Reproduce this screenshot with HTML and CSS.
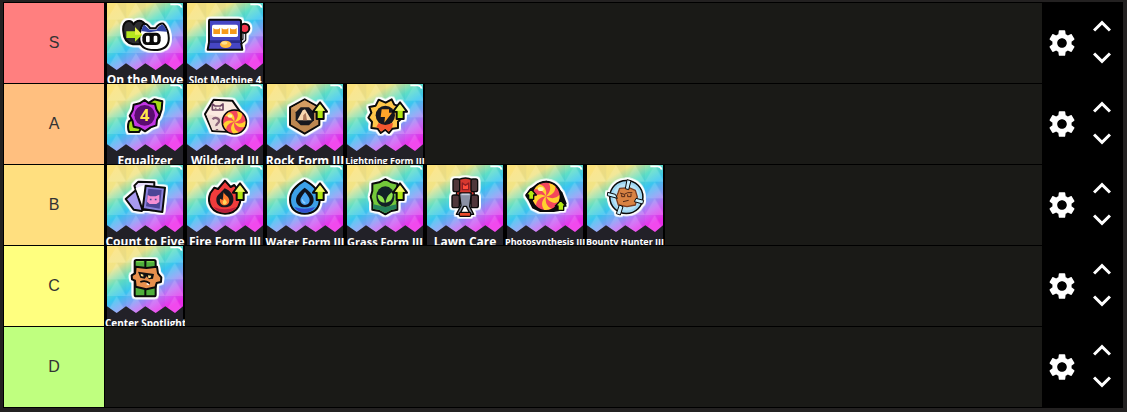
FILE: index.html
```html
<!DOCTYPE html>
<html lang="en">
<head>
    <meta charset="UTF-8">
    <meta name="viewport" content="width=device-width, initial-scale=1.0">
    <title>Tier List</title>
    <link rel="stylesheet" href="styles.css">
</head>
<body>
    <!-- shared shapes -->
    <svg class="defs" width="0" height="0" aria-hidden="true">
        <defs>
            <linearGradient id="rainbow" gradientUnits="userSpaceOnUse" x1="40" y1="0" x2="160" y2="200">
                <stop offset="0" stop-color="#fbe27c"/>
                <stop offset="0.2" stop-color="#f0e488"/>
                <stop offset="0.4" stop-color="#5fdfc6"/>
                <stop offset="0.55" stop-color="#3ac6f0"/>
                <stop offset="0.7" stop-color="#84a0f6"/>
                <stop offset="0.83" stop-color="#c66cf5"/>
                <stop offset="1" stop-color="#ef2bea"/>
            </linearGradient>
            <pattern id="triangles" width="58" height="50" patternUnits="userSpaceOnUse">
                <path d="M0 50L29 0L58 50Z" fill="#fff" opacity="0.14"/>
                <path d="M29 0H58V50Z" fill="#083c9c" opacity="0.04"/>
            </pattern>
            <g id="card">
                <rect width="228" height="240" fill="#222128"/>
                <path d="M0 0H228V181L204 201L175 181L146 201L115 181L87 201L57 181L29 201L0 181Z" fill="url(#rainbow)"/>
                <path d="M0 0H228V181L204 201L175 181L146 201L115 181L87 201L57 181L29 201L0 181Z" fill="url(#triangles)"/>
                <path d="M190 4H212Q222 4 224 14" fill="none" stroke="#fff" stroke-width="5"/>
            </g>
            <g id="up">
                <path d="M159 55L180 83H170V105H149V83H138Z" fill="#b4ea12" stroke="#0a0a0a" stroke-width="6" stroke-linejoin="round"/>
                <path d="M159 60L174 80H144Z" fill="#f3f56a" stroke="none"/>
            </g>
            <g id="candy">
                <circle r="44" fill="#f4475c" stroke="#0a0a0a" stroke-width="6"/>
                <g fill="#ffd22e" stroke="none">
                    <path id="swirl" d="M0 0C4 -18 -4 -32 -20 -36Q-30 -30 -35 -20C-20 -24 -8 -16 0 0Z"/>
                    <use href="#swirl" transform="rotate(72)"/>
                    <use href="#swirl" transform="rotate(144)"/>
                    <use href="#swirl" transform="rotate(216)"/>
                    <use href="#swirl" transform="rotate(288)"/>
                </g>
                <ellipse cx="-16" cy="-22" rx="9" ry="6" fill="#fff3a8" stroke="none"/>
            </g>
            <symbol id="gear" viewBox="0 0 24 24">
                <path d="M19.14 12.94c.04-.3.06-.61.06-.94 0-.32-.02-.64-.07-.94l2.03-1.58c.18-.14.23-.41.12-.61l-1.92-3.32c-.12-.22-.37-.29-.59-.22l-2.39.96c-.5-.38-1.03-.7-1.62-.94l-.36-2.54c-.04-.24-.24-.41-.48-.41h-3.84c-.24 0-.43.17-.47.41l-.36 2.54c-.59.24-1.13.57-1.62.94l-2.39-.96c-.22-.08-.47 0-.59.22L2.74 8.87c-.12.21-.08.47.12.61l2.03 1.58c-.05.3-.09.63-.09.94s.02.64.07.94l-2.03 1.58c-.18.14-.23.41-.12.61l1.92 3.32c.12.22.37.29.59.22l2.39-.96c.5.38 1.03.7 1.62.94l.36 2.54c.05.24.24.41.48.41h3.84c.24 0 .44-.17.47-.41l.36-2.54c.59-.24 1.13-.56 1.62-.94l2.39.96c.22.08.47 0 .59-.22l1.92-3.32c.12-.22.07-.47-.12-.61l-2.01-1.58zM12 15.6c-1.98 0-3.6-1.62-3.6-3.6s1.62-3.6 3.6-3.6 3.6 1.62 3.6 3.6-1.62 3.6-3.6 3.6z"/>
            </symbol>
            <symbol id="chevron-up" viewBox="2 3 20 20">
                <path d="M12 8l-6 6 1.41 1.41L12 10.83l4.59 4.58L18 14z"/>
            </symbol>
            <symbol id="chevron-down" viewBox="2 3 20 20">
                <path d="M16.59 8.59L12 13.17 7.41 8.59 6 10l6 6 6-6z"/>
            </symbol>
        </defs>
    </svg>

    <main class="tier-list">
        <section class="tier">
            <div class="label tier-s">S</div>
            <div class="items">
                <div class="tile">
                    <svg viewBox="0 0 228 240">
                        <use href="#card"/>
                        <g class="icon">
                            <path d="M49 86C46 66 54 54 66 54C73 54 77 58 80 65C84 54 98 50 108 57L124 74V124H78C58 120 50 104 49 86Z" fill="#2c2c30"/>
                            <path d="M97 108C97 86 103 66 112 62C120 62 126 70 130 76H146C152 66 162 59 169 62C180 72 187 94 185 112C183 132 168 141 142 141C112 141 98 130 97 108Z" fill="#fff"/>
                            <path d="M103 84C106 72 109 66 112 65L128 80H148C156 70 164 64 168 66C174 72 178 79 180 86L150 84L128 88Z" fill="#3444a6" stroke="none"/>
                            <rect x="106" y="89" width="55" height="37" rx="14" fill="#0a0a0a" stroke="none"/>
                            <rect x="117" y="98" width="11" height="20" rx="4" fill="#fff" stroke="none"/>
                            <rect x="140" y="98" width="11" height="20" rx="4" fill="#fff" stroke="none"/>
                            <path d="M58 85H84V73L106 95L84 116V105H58Z" fill="#b5e61d" stroke="none"/>
                            <path d="M84 73L106 95H84Z" fill="#e6f04a" stroke="none"/>
                        </g>
                    </svg>
                    <span class="name">On the Move</span>
                </div>
                <div class="tile">
                    <svg viewBox="0 0 228 240">
                        <use href="#card"/>
                        <g class="icon">
                            <path d="M162 118L172 110V88" fill="none" stroke-width="12"/>
                            <path d="M162 118L172 110V88" fill="none" stroke="#d9dbe8" stroke-width="5"/>
                            <circle cx="173" cy="76" r="14" fill="#f3354c"/>
                            <path d="M68 50H156Q162 50 162 56V118L166 140H62L66 118V56Q66 50 68 50Z" fill="#4646c4"/>
                            <path d="M69 112H160L162 120H68Z" fill="#2a2c8c" stroke="none"/>
                            <rect x="75" y="65" width="78" height="37" rx="5" fill="#fff" stroke="none"/>
                            <path d="M79 93V75L84 79H94L99 75V93ZM104 93V75L109 79H119L124 75V93ZM129 93V75L134 79H144L149 75V93Z" fill="#f79a1c" stroke="none"/>
                            <ellipse cx="116" cy="124" rx="17" ry="11" fill="#ffbb3d" stroke="none"/>
                            <ellipse cx="112" cy="120" rx="9" ry="5" fill="#ffdf8b" stroke="none"/>
                        </g>
                    </svg>
                    <span class="name small">Slot Machine 4</span>
                </div>
            </div>
            <div class="controls">
                <button type="button" class="settings" aria-label="Settings for tier S"><svg><use href="#gear"/></svg></button>
                <div class="move">
                    <button type="button" aria-label="Move tier S up"><svg><use href="#chevron-up"/></svg></button>
                    <button type="button" aria-label="Move tier S down"><svg><use href="#chevron-down"/></svg></button>
                </div>
            </div>
        </section>

        <section class="tier">
            <div class="label tier-a">A</div>
            <div class="items">
                <div class="tile">
                    <svg viewBox="0 0 228 240">
                        <use href="#card"/>
                        <g class="icon">
                            <path d="M126 56L142 46L166 52L164 76L156 100L130 90Z" fill="#a6dc18"/>
                            <path d="M66 112L84 100L104 130L96 144L66 144Q60 128 66 112Z" fill="#a6dc18"/>
                            <path d="M113 48L126 58L144 60L148 76L158 92L150 108L148 124L131 130L114 142L98 132L80 128L77 112L68 95L77 79L80 62L98 58Z" fill="#c436e6"/>
                            <circle cx="113" cy="94" r="31" fill="#5a0c70" stroke="none"/>
                            <text class="number" x="113" y="112">4</text>
                        </g>
                    </svg>
                    <span class="name">Equalizer</span>
                </div>
                <div class="tile">
                    <svg viewBox="0 0 228 240">
                        <use href="#card"/>
                        <g class="icon">
                            <path d="M54 90L80 47L136 50L160 84L134 144L76 141Z" fill="#fbeae0"/>
                            <path d="M57 90L106 100L132 142L76 138Z" fill="#f1dcd4" stroke="none"/>
                            <path d="M76 78V60L84 66H100L108 60V78Z" fill="none" stroke="#6e4663" stroke-width="5"/>
                            <path d="M86 71V74M98 71V74" stroke="#6e4663" stroke-width="5"/>
                            <path d="M77 106C82 98 98 102 96 112C95 119 87 118 88 126M90 135V138" fill="none" stroke="#8a6379" stroke-width="7"/>
                            <use href="#candy" transform="translate(142 114) scale(.82)"/>
                        </g>
                    </svg>
                    <span class="name">Wildcard III</span>
                </div>
                <div class="tile">
                    <svg viewBox="0 0 228 240">
                        <use href="#card"/>
                        <g class="icon">
                            <path d="M113 46L157 70V123L113 149L69 123V70Z" fill="#bd8750"/>
                            <path d="M113 49L154 72L113 97L72 72Z" fill="#d39c62" stroke="none"/>
                            <path d="M101 70H126L141 85V109L126 124H101L86 109V85Z" fill="#17181f" stroke="none"/>
                            <path d="M91 109L107 79L114 76L134 109Z" fill="#f8d8b0" stroke="none"/>
                            <path d="M109 94L116 86L120 109H108Z" fill="#ac785a" stroke="none"/>
                            <use href="#up"/>
                        </g>
                    </svg>
                    <span class="name">Rock Form III</span>
                </div>
                <div class="tile">
                    <svg viewBox="0 0 228 240">
                        <use href="#card"/>
                        <g class="icon">
                            <path d="M116 56L134 46L142 62L161 68L156 87L166 101L153 113L153 132L136 134L126 147L115 137L101 147L92 134L73 132L75 114L64 101L73 86L67 69L86 65L95 47Z" fill="#ffc64a"/>
                            <path d="M94 118H138L135 131L125 143L115 134L102 143L94 131L88 130Z" fill="#f4562f" stroke="none"/>
                            <circle cx="115" cy="94" r="29" fill="#17181f" stroke="none"/>
                            <path d="M104 76H126V86H135L112 116L114 99H101Z" fill="#ffa42a" stroke="none"/>
                            <use href="#up"/>
                        </g>
                    </svg>
                    <span class="name tiny">Lightning Form III</span>
                </div>
            </div>
            <div class="controls">
                <button type="button" class="settings" aria-label="Settings for tier A"><svg><use href="#gear"/></svg></button>
                <div class="move">
                    <button type="button" aria-label="Move tier A up"><svg><use href="#chevron-up"/></svg></button>
                    <button type="button" aria-label="Move tier A down"><svg><use href="#chevron-down"/></svg></button>
                </div>
            </div>
        </section>

        <section class="tier">
            <div class="label tier-b">B</div>
            <div class="items">
                <div class="tile">
                    <svg viewBox="0 0 228 240">
                        <use href="#card"/>
                        <g class="icon">
                            <path d="M56 102L88 74L122 120L104 138L80 134Z" fill="#a99af0"/>
                            <path d="M82 62L94 50L142 52L140 136L106 134Z" fill="#e8dcfb"/>
                            <path d="M86 70L112 60V132Z" fill="#fff" stroke="none"/>
                            <path d="M116 62L174 68L166 141L107 132Z" fill="#8a80dc"/>
                            <path d="M124 71L164 75L158 131L117 124Z" fill="#4c4597" stroke="none"/>
                            <path d="M122 90L130 94H146L157 89V111L148 117H128L120 110Z" fill="#f58fd4" stroke="none"/>
                            <path d="M131 101V106M146 101V106" stroke="#4c4597" stroke-width="5"/>
                        </g>
                    </svg>
                    <span class="name">Count to Five</span>
                </div>
                <div class="tile">
                    <svg viewBox="0 0 228 240">
                        <use href="#card"/>
                        <g class="icon">
                            <path d="M114 47L131 66L142 60L158 82C166 112 154 146 114 146C74 146 58 114 70 84L82 68L93 72Z" fill="#f03c3c"/>
                            <path d="M80 126Q112 140 148 126Q136 143 114 143Q92 143 80 126Z" fill="#b81f3d" stroke="none"/>
                            <path d="M113 70C130 76 142 92 139 108C136 122 126 127 113 127C98 127 88 118 88 104C88 90 100 86 113 70Z" fill="#17181f" stroke="none"/>
                            <path d="M110 82C114 92 126 94 127 106C127 118 119 121 112 121C103 120 97 113 99 101L107 105C109 98 108 90 110 82Z" fill="#ff7b2e" stroke="none"/>
                            <path d="M113 101L120 112Q118 119 112 119Q106 117 107 111Z" fill="#ffd65c" stroke="none"/>
                            <use href="#up"/>
                        </g>
                    </svg>
                    <span class="name">Fire Form III</span>
                </div>
                <div class="tile">
                    <svg viewBox="0 0 228 240">
                        <use href="#card"/>
                        <g class="icon">
                            <path d="M113 46C140 60 158 80 158 104C158 130 140 146 113 146C86 146 69 130 69 104C69 80 88 60 113 46Z" fill="#3ca0e8"/>
                            <path d="M82 126Q112 136 144 126Q134 143 113 143Q92 143 82 126Z" fill="#344ed0" stroke="none"/>
                            <path d="M113 68C130 80 140 92 140 104C140 119 128 127 113 127C98 127 87 119 87 104C87 92 98 80 113 68Z" fill="#10121c" stroke="none"/>
                            <path d="M114 81C122 91 128 98 128 106C128 115 121 120 114 120C106 120 100 114 100 106C100 98 107 91 114 81Z" fill="#4aa5f2" stroke="none"/>
                            <path d="M106 103Q106 113 115 114" fill="none" stroke="#8fd0ff" stroke-width="4"/>
                            <use href="#up"/>
                        </g>
                    </svg>
                    <span class="name medium">Water Form III</span>
                </div>
                <div class="tile">
                    <svg viewBox="0 0 228 240">
                        <use href="#card"/>
                        <g class="icon">
                            <path d="M115 42L133 52L151 56V78L156 95L151 112V134L133 138L115 148L97 138L76 134V112L71 95L76 78V56L97 52Z" fill="#74c83a"/>
                            <path d="M79 118L115 126L148 118V131L132 135L115 144L98 135L79 131Z" fill="#25805a" stroke="none"/>
                            <ellipse cx="115" cy="95" rx="27" ry="31" fill="#122126" stroke="none"/>
                            <path d="M113 113C98 112 92 101 92 89C106 91 113 101 113 113ZM116 113C118 96 125 87 137 81C139 100 132 111 116 113Z" fill="#8de04c" stroke="none"/>
                            <use href="#up"/>
                        </g>
                    </svg>
                    <span class="name medium">Grass Form III</span>
                </div>
                <div class="tile">
                    <svg viewBox="0 0 228 240">
                        <use href="#card"/>
                        <g class="icon thin">
                            <path d="M82 62H146M82 108H146" stroke-width="12"/>
                            <path d="M94 44Q116 34 136 44L142 88L132 114H98L88 88Z" fill="#d6382f"/>
                            <rect x="78" y="42" width="20" height="38" rx="6" fill="#50373a"/>
                            <rect x="132" y="42" width="20" height="38" rx="6" fill="#50373a"/>
                            <rect x="75" y="90" width="22" height="38" rx="6" fill="#50373a"/>
                            <rect x="132" y="90" width="22" height="38" rx="6" fill="#50373a"/>
                            <path d="M97 84H133L128 124L140 148H130L118 124H110L98 148H88L102 122Z" fill="#8b91a5"/>
                            <path d="M106 54L115 61L125 54V74H106Z" fill="#ff4b3a" stroke="#8e1f24" stroke-width="4"/>
                            <path d="M103 88H128" stroke="#c8cede" stroke-width="5"/>
                            <rect x="97" y="142" width="34" height="12" rx="3" fill="#ea4a2c"/>
                        </g>
                    </svg>
                    <span class="name">Lawn Care</span>
                </div>
                <div class="tile">
                    <svg viewBox="0 0 228 240">
                        <use href="#card"/>
                        <g class="icon">
                            <path d="M70 74L58 92L66 104L78 128L100 138H140L162 134L176 116L164 84L144 62L118 50L98 56Z" fill="#0a0a0a"/>
                            <use href="#candy" transform="translate(117 94)"/>
                            <path d="M72 72L88 90H80V103H65V90H57Z" fill="#b4ea12" stroke-width="4"/>
                            <path d="M161 106L177 123H170V136H153V123H145Z" fill="#b4ea12" stroke-width="4"/>
                        </g>
                    </svg>
                    <span class="name tiny">Photosynthesis III</span>
                </div>
                <div class="tile">
                    <svg viewBox="0 0 228 240">
                        <use href="#card"/>
                        <g class="icon thin">
                            <circle cx="118" cy="96" r="44" fill="none" stroke-width="16"/>
                            <circle cx="118" cy="96" r="44" fill="#b7e3f7" stroke="#9dd5f0" stroke-width="7"/>
                            <path d="M98 70L126 68L145 76L151 96L145 120L120 125L94 120L87 98L93 84Z" fill="#d98343" stroke="#7b3e22"/>
                            <path d="M99 84L112 88L122 83H136M104 88V95H113V89M122 88V95H132V86M108 110L125 106" fill="none" stroke="#532917" stroke-width="3"/>
                            <path d="M120 44L132 47L125 74L115 71ZM62 82L85 88L91 100L61 92ZM97 120L108 125L100 150L88 146ZM147 100L170 106L167 117L142 110Z" fill="#c8f0ff" stroke-width="3"/>
                        </g>
                    </svg>
                    <span class="name tiny">Bounty Hunter III</span>
                </div>
            </div>
            <div class="controls">
                <button type="button" class="settings" aria-label="Settings for tier B"><svg><use href="#gear"/></svg></button>
                <div class="move">
                    <button type="button" aria-label="Move tier B up"><svg><use href="#chevron-up"/></svg></button>
                    <button type="button" aria-label="Move tier B down"><svg><use href="#chevron-down"/></svg></button>
                </div>
            </div>
        </section>

        <section class="tier">
            <div class="label tier-c">C</div>
            <div class="items">
                <div class="tile">
                    <svg viewBox="0 0 228 240">
                        <use href="#card"/>
                        <g class="icon">
                            <rect x="83" y="42" width="63" height="109" rx="5" fill="#4fae3c"/>
                            <path d="M115 42V151" fill="none"/>
                            <path d="M88 47H110M120 47H141" stroke="#7dd34d" stroke-width="4"/>
                            <path d="M86 62L118 66L150 62L153 82L163 94L162 108L149 111L145 124L118 130L86 122L84 104L75 100L74 88L84 82Z" fill="#e8904d"/>
                            <path d="M93 77L141 84L138 98L126 100L119 91L113 98L100 95Z" fill="#111" stroke="none"/>
                            <path d="M101 83L109 86V92L102 90ZM123 88L133 89L130 96H124Z" fill="#ffe08a" stroke="none"/>
                            <path d="M100 108Q114 101 127 111L124 115" fill="none" stroke-width="5"/>
                            <path d="M119 113L126 116" stroke="#fff" stroke-width="4"/>
                        </g>
                    </svg>
                    <span class="name small">Center Spotlight</span>
                </div>
            </div>
            <div class="controls">
                <button type="button" class="settings" aria-label="Settings for tier C"><svg><use href="#gear"/></svg></button>
                <div class="move">
                    <button type="button" aria-label="Move tier C up"><svg><use href="#chevron-up"/></svg></button>
                    <button type="button" aria-label="Move tier C down"><svg><use href="#chevron-down"/></svg></button>
                </div>
            </div>
        </section>

        <section class="tier">
            <div class="label tier-d">D</div>
            <div class="items"></div>
            <div class="controls">
                <button type="button" class="settings" aria-label="Settings for tier D"><svg><use href="#gear"/></svg></button>
                <div class="move">
                    <button type="button" aria-label="Move tier D up"><svg><use href="#chevron-up"/></svg></button>
                    <button type="button" aria-label="Move tier D down"><svg><use href="#chevron-down"/></svg></button>
                </div>
            </div>
        </section>
    </main>
</body>
</html>
```
FILE: styles.css
```css
body {
    margin: 0;
    padding: 2px 4px 4px 3px;
    background-color: #232121;
    font-family: "Liberation Sans", Arial, sans-serif;
}
.defs {
    position: absolute;
}
.tier-list {
    background-color: #000;
    border: 1px solid #000;
    border-bottom: none;
}
.tier {
    display: flex;
    min-height: 80px;
    border-bottom: 1px solid #000;
}
.label {
    display: flex;
    align-items: center;
    justify-content: center;
    width: 100px;
    flex-shrink: 0;
    border-right: 1px solid #000;
    color: #333;
    font-size: 16px;
    line-height: 20px;
}
.tier-s {
    background-color: #ff7f7f;
}
.tier-a {
    background-color: #ffbf7f;
}
.tier-b {
    background-color: #ffdf7f;
}
.tier-c {
    background-color: #ffff7f;
}
.tier-d {
    background-color: #bfff7f;
}
.items {
    display: flex;
    flex-wrap: wrap;
    flex: 1;
    background-color: #1a1a17;
}
.tile {
    position: relative;
    width: 76px;
    height: 80px;
    padding: 0 2px;
    overflow: hidden;
    background-color: #000;
}
.tile svg {
    display: block;
    width: 76px;
    height: 80px;
}
.icon {
    stroke: #0a0a0a;
    stroke-width: 6px;
    stroke-linejoin: round;
    filter: drop-shadow(5px 0 #fff) drop-shadow(-5px 0 #fff) drop-shadow(0 5px #fff) drop-shadow(0 -5px #fff);
}
.icon.thin {
    stroke-width: 4px;
}
.number {
    fill: #ffe84a;
    stroke: none;
    font-family: "Open Sans", sans-serif;
    font-size: 50px;
    font-weight: bold;
    text-anchor: middle;
}
/* card title, cut off by the bottom of the tile */
.name {
    position: absolute;
    top: 69px;
    left: 0;
    right: 0;
    line-height: 16px;
    color: #fff;
    font-family: "Open Sans", sans-serif;
    font-size: 12px;
    font-weight: bold;
    text-align: center;
    white-space: nowrap;
}
.name.medium {
    font-size: 11px;
}
.name.small {
    font-size: 10px;
}
.name.tiny {
    font-size: 9px;
}
.controls {
    display: flex;
    flex-shrink: 0;
    align-items: center;
}
.controls button {
    display: flex;
    align-items: center;
    justify-content: center;
    width: 40px;
    height: 31px;
    padding: 0;
    border: none;
    background: none;
    cursor: pointer;
}
.controls svg {
    width: 30px;
    height: 30px;
    fill: #fff;
}
.controls .settings svg {
    width: 32px;
    height: 32px;
    flex-shrink: 0;
}
```
